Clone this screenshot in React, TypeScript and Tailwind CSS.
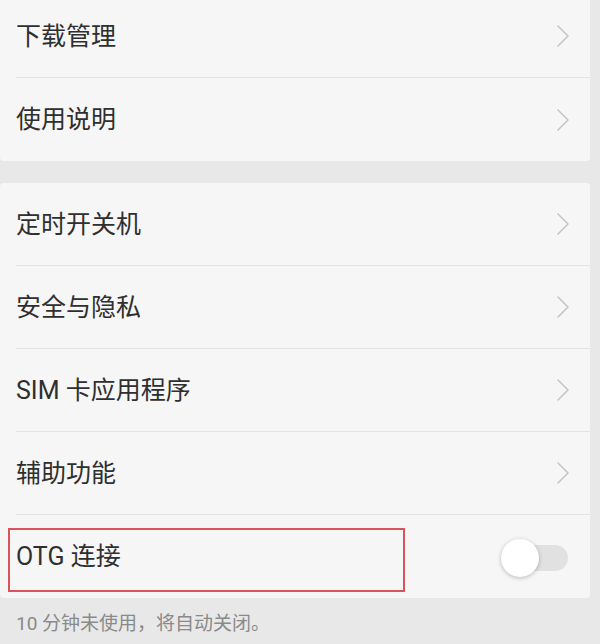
const font = { fontFamily: 'Roboto, "Noto Sans CJK SC", sans-serif' };

const Chevron = () => (
    <svg width="14" height="24" viewBox="0 0 14 24" fill="none" className="mr-[20px]">
        <path d="M2 2 L12 12 L2 22" stroke="#c6c6c6" strokeWidth="1.6" strokeLinecap="round" strokeLinejoin="round" />
    </svg>
);

type RowProps = {
    label: string;
    last?: boolean;
    children?: React.ReactNode;
};

const Row = ({ label, last, children }: RowProps) => (
    <div className="relative h-[83px] pl-4">
        <div className={`flex items-center justify-between h-full ${last ? "" : "border-b border-[#e4e4e4]"}`}>
            <span className="text-[25px] text-[#2f2f2f] leading-none">{label}</span>
            {children ?? <Chevron />}
        </div>
    </div>
);

export default function App() {
    return (
        <div className="w-[600px] h-[644px] overflow-hidden bg-[#e8e8e8]" style={font}>
            {/* Card 1 */}
            <div className="-mt-[5px] mr-[10px] bg-[#f6f6f6] rounded-b-[4px]">
                <Row label="下载管理" />
                <Row label="使用说明" last />
            </div>

            {/* Card 2 */}
            <div className="mt-[22px] mr-[10px] bg-[#f6f6f6] rounded-[4px]">
                <Row label="定时开关机" />
                <Row label="安全与隐私" />
                <Row label="SIM 卡应用程序" />
                <Row label="辅助功能" />
                <div className="relative h-[83px] pl-4">
                    <div className="flex items-center justify-between h-full">
                        <span className="text-[25px] text-[#2f2f2f] leading-none">OTG 连接</span>
                        <div className="relative w-[48px] h-[26px] mr-[22px] mt-[2px] rounded-full bg-[#e1e1e1]">
                            <div className="absolute -left-[19px] -top-[6px] w-[38px] h-[38px] rounded-full bg-white shadow-[0_1px_4px_rgba(0,0,0,0.25)]" />
                        </div>
                    </div>
                    {/* highlight box */}
                    <div className="absolute left-[8px] top-[13px] w-[397px] h-[64px] border-2 border-[#d9545a]" />
                </div>
            </div>

            {/* Footer */}
            <div className="pl-4 pt-[12px] text-[19px] text-[#8a8a8a]">10 分钟未使用，将自动关闭。</div>
        </div>
    );
}
